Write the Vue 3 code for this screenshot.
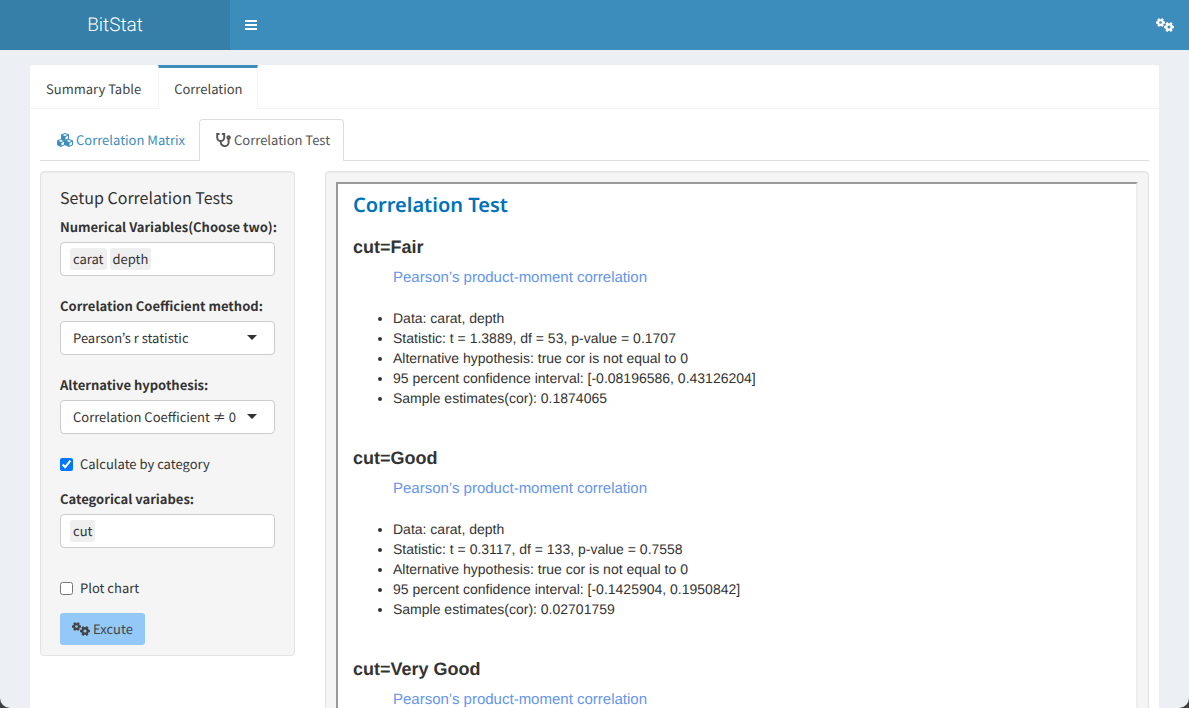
<script setup>
import { ref } from 'vue'

const numeric = ref(['carat', 'depth'])
const category = ref(['cut'])
const method = ref('Pearson’s r statistic')
const hypothesis = ref('Correlation Coefficient ≠ 0')
const byCategory = ref(true)
const plot = ref(false)

const results = [
  {
    name: 'cut=Fair',
    items: ['Data: carat, depth', 'Statistic: t = 1.3889, df = 53, p-value = 0.1707', 'Alternative hypothesis: true cor is not equal to 0', '95 percent confidence interval: [-0.08196586, 0.43126204]', 'Sample estimates(cor): 0.1874065'],
  },
  {
    name: 'cut=Good',
    items: ['Data: carat, depth', 'Statistic: t = 0.3117, df = 133, p-value = 0.7558', 'Alternative hypothesis: true cor is not equal to 0', '95 percent confidence interval: [-0.1425904, 0.1950842]', 'Sample estimates(cor): 0.02701759'],
  },
  { name: 'cut=Very Good', items: [] },
]
</script>

<template>
  <div class="page">
    <svg width="0" height="0" class="defs" aria-hidden="true">
      <symbol id="gear" viewBox="-10 -10 20 20">
        <g fill="currentColor">
          <path fill-rule="evenodd" d="M-7.500 0a7.500 7.500 0 1 0 15 0a7.500 7.500 0 1 0 -15 0zM-3 0a3 3 0 1 0 6 0a3 3 0 1 0 -6 0z" />
          <rect v-for="a in 6" :key="a" x="-2.6" y="-10" width="5.2" height="4.4" rx="1" :transform="`rotate(${a * 60 + 30})`" />
        </g>
      </symbol>
      <symbol id="gears" viewBox="0 0 18 14">
        <use href="#gear" x="0" y="0" width="9" height="9" />
        <use href="#gear" x="8" y="4" width="10" height="10" />
      </symbol>
      <symbol id="cube" viewBox="0 0 8 8">
        <path fill="currentColor" fill-rule="evenodd" d="M4 0L7.600 1.300Q8 1.500 8 2V5.700Q8 6.100 7.700 6.300L4 8L.3 6.300Q0 6.100 0 5.700V2Q0 1.500 .4 1.300zM4 1L1.600 1.900L4 2.900L6.400 1.900zM4.500 3.900V6.700L7 5.500V2.800z" />
      </symbol>
    </svg>

    <header class="top">
      <a class="brand" href="#">BitStat</a>
      <nav class="bar">
        <button class="icon-btn" type="button" aria-label="Toggle navigation">
          <svg width="14" height="12" viewBox="0 0 14 12"><path fill="currentColor" d="M1 1h12v2H1zM1 5h12v2H1zM1 9h12v2H1z" /></svg>
        </button>
        <button class="icon-btn" type="button" aria-label="Settings">
          <svg width="18" height="14"><use href="#gears" /></svg>
        </button>
      </nav>
    </header>

    <main class="content">
      <div class="box">
        <nav class="tabs">
          <a class="tab" href="#">Summary Table</a>
          <a class="tab active" href="#">Correlation</a>
        </nav>
        <div class="body">
          <nav class="subtabs">
            <a class="subtab" href="#">
              <svg width="16" height="14" viewBox="0 0 16 14">
                <use href="#cube" x="4" y="0" width="8" height="8" />
                <use href="#cube" x="0" y="6" width="8" height="8" />
                <use href="#cube" x="8" y="6" width="8" height="8" />
              </svg>
              Correlation Matrix
            </a>
            <a class="subtab active" href="#">
              <svg width="15" height="14" viewBox="0 0 15 14" fill="none" stroke="currentColor" stroke-width="1.900" stroke-linecap="round">
                <path d="M2.800 1H1.200v3.500a3.500 3.500 0 0 0 7 0V1H6.600M4.800 8.500v1a3.900 3.600 0 0 0 7.800 0V6" />
                <circle cx="12.600" cy="4.400" r="1.300" />
              </svg>
              Correlation Test
            </a>
          </nav>

          <div class="columns">
            <form class="well setup" @submit.prevent>
              <h2>Setup Correlation Tests</h2>
              <div class="group">
                <label for="numeric">Numerical Variables(Choose two):</label>
                <div class="control">
                  <span v-for="v in numeric" :key="v" class="chip">{{ v }}</span>
                  <input id="numeric" type="text" />
                </div>
              </div>
              <div class="group">
                <label for="method">Correlation Coefficient method:</label>
                <div class="pick">
                  <select id="method" v-model="method" class="control"><option>Pearson’s r statistic</option></select>
                </div>
              </div>
              <div class="group">
                <label for="hyp">Alternative hypothesis:</label>
                <div class="pick">
                  <select id="hyp" v-model="hypothesis" class="control"><option>Correlation Coefficient ≠ 0</option></select>
                </div>
              </div>
              <label class="check"><input v-model="byCategory" type="checkbox" />Calculate by category</label>
              <div class="group last">
                <label for="category">Categorical variabes:</label>
                <div class="control">
                  <span v-for="v in category" :key="v" class="chip">{{ v }}</span>
                  <input id="category" type="text" />
                </div>
              </div>
              <label class="check"><input v-model="plot" type="checkbox" />Plot chart</label>
              <button class="run" type="submit"><svg width="18" height="14"><use href="#gears" /></svg>Excute</button>
            </form>

            <section class="well output">
              <div class="frame">
                <h1>Correlation Test</h1>
                <article v-for="r in results" :key="r.name" class="result">
                  <h3>{{ r.name }}</h3>
                  <p>Pearson’s product-moment correlation</p>
                  <ul><li v-for="i in r.items" :key="i">{{ i }}</li></ul>
                </article>
              </div>
            </section>
          </div>
        </div>
      </div>
    </main>
  </div>
</template>

<style>
body {
  background: #3c3f44;
}
</style>

<style scoped>
* {
  box-sizing: border-box;
}
.page {
  height: 100vh;
  overflow: hidden;
  display: flex;
  flex-direction: column;
  background: #ecf0f5;
  border-radius: 0 0 10px 10px;
  font: 13px/20px "Noto Sans CJK KR", "Noto Sans", sans-serif;
  text-rendering: geometricPrecision;
  color: #333;
}
.defs {
  position: absolute;
}
a {
  color: inherit;
  text-decoration: none;
}
h1, h2, h3, p, ul {
  margin: 0;
}
.top {
  display: flex;
  flex: none;
  height: 50px;
  color: #fff;
}
.brand {
  width: 230px;
  background: #367fa9;
  text-align: center;
  font: 300 19px/50px Roboto, sans-serif;
}
.bar {
  flex: 1;
  display: flex;
  align-items: center;
  justify-content: space-between;
  padding: 0 15px 0 14px;
  background: #3c8dbc;
}
.icon-btn {
  display: flex;
  padding: 0;
  border: 0;
  background: none;
  color: inherit;
}
.content {
  padding: 15px 30px;
}
.box {
  background: #fff;
  border-radius: 3px;
  min-height: 100vh;
}
.tabs {
  display: flex;
  height: 44px;
  border-bottom: 1px solid #f4f4f4;
}
.tab {
  height: 44px;
  padding: 11px 16px 0 15px;
  border: 1px solid transparent;
  border-top: 3px solid transparent;
  border-bottom: 0;
  color: #444;
}
.tab.active {
  padding-right: 14px;
  border-color: #3c8dbc #f4f4f4;
  background: #fff;
}
.body {
  padding: 10px;
}
.subtabs {
  display: flex;
  height: 42px;
  border-bottom: 1px solid #ddd;
}
.subtab {
  display: flex;
  align-items: center;
  gap: 3px;
  height: 42px;
  padding: 0 13px 2px 16px;
  border: 1px solid transparent;
  border-bottom: 0;
  border-radius: 4px 4px 0 0;
  color: #3c8dbc;
}
.subtab.active {
  background: #fff;
  border-color: #ddd;
  color: #555;
}
.columns {
  display: grid;
  grid-template-columns: 255px 1fr;
  gap: 30px;
  align-items: start;
  padding-top: 10px;
}
.well {
  background: #f5f5f5;
  border: 1px solid #e3e3e3;
  border-radius: 4px;
  box-shadow: inset 0 1px 1px rgba(0, 0, 0, 0.05);
}
.setup {
  padding: 15px 19px 10px;
}
h2 {
  font-size: 16px;
  font-weight: 400;
  line-height: 20px;
  margin-bottom: 10px;
}
.group {
  margin-bottom: 20px;
}
.group > label {
  display: block;
  margin-bottom: 5px;
  font-weight: 700;
  white-space: nowrap;
}
.control {
  display: flex;
  align-items: center;
  gap: 3px;
  width: 100%;
  height: 34px;
  padding: 0 9px;
  border: 1px solid #ccc;
  border-radius: 4px;
  background: #fff;
  color: #333;
  font: inherit;
  text-rendering: inherit;
}
select.control {
  appearance: none;
  padding: 0 12px;
}
.control input {
  flex: 1;
  min-width: 0;
  border: 0;
  outline: 0;
  font: inherit;
}
.chip {
  padding: 1px 3px;
  border-radius: 3px;
  background: #efefef;
}
.pick {
  position: relative;
}
.pick::after {
  content: "";
  position: absolute;
  right: 18px;
  top: 14px;
  border: 5px solid transparent;
  border-top-color: #333;
  border-bottom: 0;
  pointer-events: none;
}
.check {
  display: flex;
  align-items: center;
  gap: 7px;
  margin-bottom: 15px;
}
.check input {
  width: 13px;
  height: 13px;
  margin: 0;
  accent-color: #0075ff;
}
.last {
  margin-bottom: 30px;
}
.run {
  display: flex;
  align-items: center;
  gap: 3px;
  height: 32px;
  padding: 0 12px;
  border: 0;
  border-radius: 3px;
  background: #92c9f8;
  color: #444;
  font: inherit;
  text-rendering: inherit;
}
.output {
  padding: 10px;
}
.frame {
  padding: 10px 15px;
  border: 2px solid;
  border-color: #9a9a9a #eee #eee #9a9a9a;
  background: #fff;
  font: 14px/20px "Liberation Sans", Arial, sans-serif;
}
h1 {
  color: #0072bc;
  font: 600 20px/22px "Noto Sans", sans-serif;
  margin-bottom: 21px;
}
h3 {
  font-size: 18px;
  line-height: 20px;
  font-weight: 700;
}
.result p {
  margin: 11px 0 20px 40px;
  color: #6495ed;
  font-size: 15px;
  line-height: 20px;
}
ul {
  padding-left: 40px;
  min-height: 140px;
}
</style>
